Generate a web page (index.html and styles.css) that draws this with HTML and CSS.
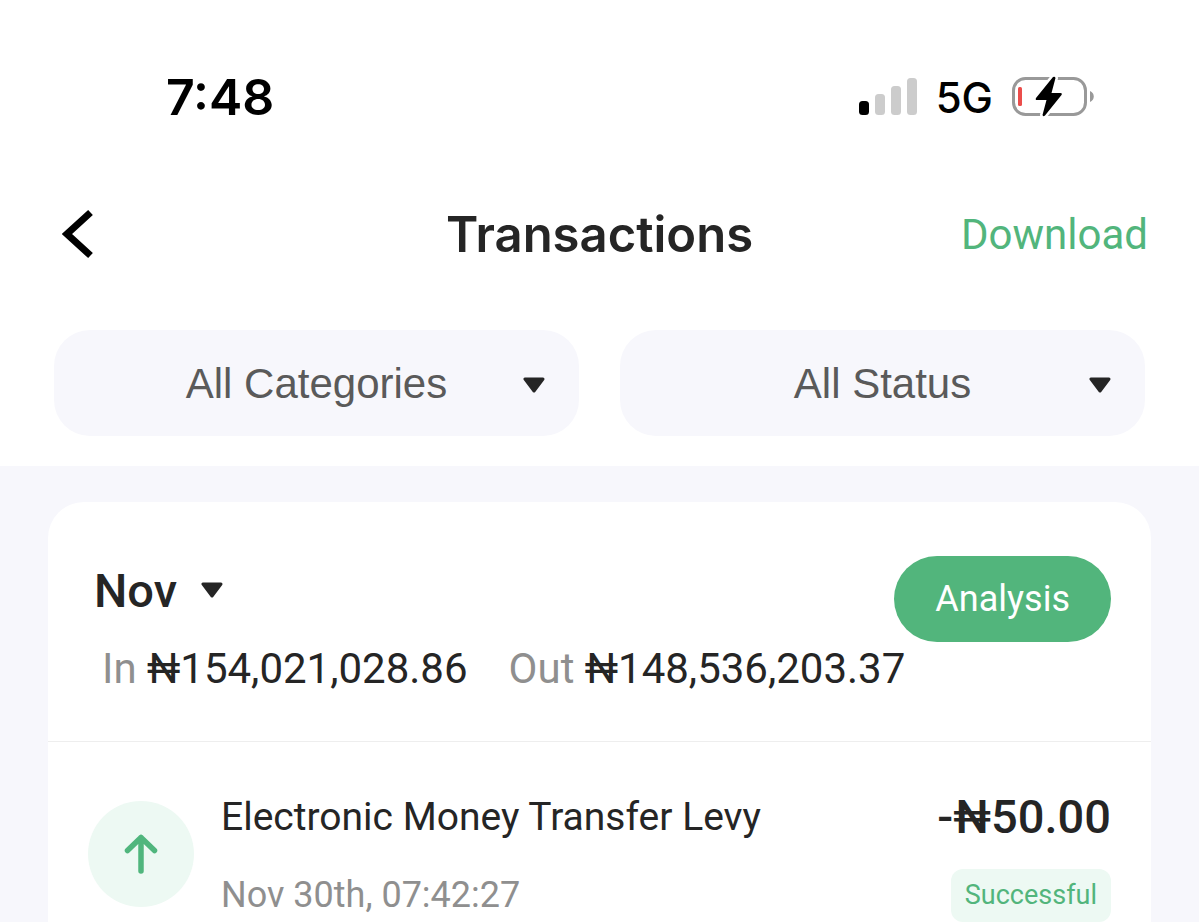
FILE: index.html
```html
<!DOCTYPE html>
<html lang="en">
<head>
  <meta charset="UTF-8">
  <meta name="viewport" content="width=device-width, initial-scale=1">
  <title>Transactions</title>
  <link rel="stylesheet" href="styles.css">
</head>
<body>
  <header class="top">
    <!-- Status bar -->
    <div class="status-bar">
      <span class="clock">7:48</span>
      <div class="status-icons">
        <svg class="signal" width="58" height="38" viewBox="0 0 58 38" aria-hidden="true">
          <rect x="0" y="23" width="10" height="14" rx="3.500" fill="#000"/>
          <rect x="16" y="16" width="10" height="21" rx="3.500" fill="#ccc"/>
          <rect x="32" y="8" width="10" height="29" rx="3.500" fill="#ccc"/>
          <rect x="48" y="0" width="10" height="37" rx="3.500" fill="#ccc"/>
        </svg>
        <span class="network">5G</span>
        <svg class="battery" width="82" height="42" viewBox="0 0 82 42" aria-hidden="true">
          <rect x="1.500" y="2.500" width="72" height="36" rx="12" fill="none" stroke="#999" stroke-width="3"/>
          <path d="M78 15C83 17 83 24 78 26Z" fill="#999"/>
          <rect x="6" y="11" width="4" height="19" rx="1.500" fill="#eb4d4b"/>
          <path d="M41 1L24 22Q23 24 25 24H34.500L30.500 39Q31 41 33 39.500L49.500 19Q50.500 17 48.500 17H39.500L43.500 2Q43 0 41 1Z" fill="#000" stroke="#fff" stroke-width="5" paint-order="stroke" stroke-linejoin="round"/>
        </svg>
      </div>
    </div>

    <nav class="nav">
      <button class="back" type="button" aria-label="Back">
        <svg width="32" height="50" viewBox="0 0 32 50" aria-hidden="true">
          <path d="M28.500 3.500L5 25L28.500 46.500" fill="none" stroke="#000" stroke-width="7"/>
        </svg>
      </button>
      <h1>Transactions</h1>
      <a class="download" href="#">Download</a>
    </nav>

    <div class="filters">
      <div class="filter">
        <select aria-label="Category">
          <option>All Categories</option>
        </select>
        <svg class="caret" width="22" height="16" viewBox="0 0 22 16" aria-hidden="true">
          <path d="M2 2H20L11 14Z"/>
        </svg>
      </div>
      <div class="filter">
        <select aria-label="Status">
          <option>All Status</option>
        </select>
        <svg class="caret" width="22" height="16" viewBox="0 0 22 16" aria-hidden="true">
          <path d="M2 2H20L11 14Z"/>
        </svg>
      </div>
    </div>
  </header>

  <main>
    <section class="card">
      <div class="summary">
        <div class="summary-head">
          <div class="month">
            <select aria-label="Month">
              <option>Nov</option>
            </select>
            <svg class="caret" width="22" height="16" viewBox="0 0 22 16" aria-hidden="true">
              <path d="M2 2H20L11 14Z"/>
            </svg>
          </div>
          <button class="analysis" type="button">Analysis</button>
        </div>
        <div class="totals">
          <div>In <strong>₦154,021,028.86</strong></div>
          <div>Out <strong>₦148,536,203.37</strong></div>
        </div>
      </div>

      <!-- Transaction list -->
      <article class="transaction">
        <div class="icon">
          <svg width="34" height="40" viewBox="0 0 34 40" aria-hidden="true">
            <path d="M17 37V3.500M3.500 16.500L17 3.500L30.500 16.500" fill="none" stroke="#50b67d" stroke-width="5.500" stroke-linecap="round" stroke-linejoin="round"/>
          </svg>
        </div>
        <div class="details">
          <h2>Electronic Money Transfer Levy</h2>
          <time datetime="11-30T07:42:27">Nov 30th, 07:42:27</time>
        </div>
        <div class="result">
          <span class="amount">-₦50.00</span>
          <span class="badge">Successful</span>
        </div>
      </article>
    </section>
  </main>
</body>
</html>
```
FILE: styles.css
```css
:root {
  --green: #52b57c;
  --green-light: #edf9f3;
  --surface: #f7f7fc;
  --text: #252525;
  --muted: #8f8f8f;
}
* {
  box-sizing: border-box;
}
body {
  margin: 0;
  min-height: 100vh;
  display: flex;
  flex-direction: column;
  font-family: Roboto, sans-serif;
  background: var(--surface);
  color: var(--text);
}
h1, h2 {
  margin: 0;
}
button, select {
  border: none;
  padding: 0;
  background: none;
  font: inherit;
  color: inherit;
  cursor: pointer;
}
select {
  appearance: none;
}
.top {
  background: #fff;
  padding: 67px 54px 30px;
}

/* Status bar */
.status-bar {
  display: flex;
  justify-content: space-between;
  align-items: center;
  height: 60px;
  padding: 0 51px 0 112px;
  font-family: Inter, sans-serif;
  color: #000;
}
.clock {
  font-size: 50px;
  font-weight: 600;
}
.status-icons {
  display: flex;
  align-items: center;
  gap: 19px;
}
.network {
  font-size: 42px;
  font-weight: 500;
}

/* Title row */
.nav {
  display: grid;
  grid-template-columns: 1fr auto 1fr;
  align-items: center;
  height: 80px;
  margin: 67px -3px 56px;
}
.back {
  justify-self: start;
  display: flex;
  padding: 0 11px;
}
h1 {
  font-family: Inter, sans-serif;
  font-size: 49px;
  font-weight: 600;
}
.download {
  justify-self: end;
  font-size: 42px;
  color: var(--green);
  text-decoration: none;
}

/* Filters */
.filters {
  display: grid;
  grid-template-columns: 1fr 1fr;
  gap: 41px;
}
.filter {
  display: grid;
  align-items: center;
  background: var(--surface);
  border-radius: 36px;
}
.filter select,
.filter .caret {
  grid-area: 1 / 1;
}
.filter select {
  height: 106px;
  font-family: "Liberation Sans", Arial, sans-serif;
  font-size: 42px;
  color: #5a5a5a;
  text-align-last: center;
}
.filter .caret {
  justify-self: end;
  margin: 4px 34px 0 0;
}
.caret {
  fill: var(--text);
  stroke: var(--text);
  stroke-width: 3;
  stroke-linejoin: round;
  pointer-events: none;
}

/* Card */
main {
  flex: 1;
  display: flex;
  padding: 36px 48px 0;
}
.card {
  flex: 1;
  background: #fff;
  border-radius: 36px 36px 0 0;
}
.summary {
  padding: 54px 40px 45px 46px;
  border-bottom: 1px solid #eee;
}
.summary-head {
  display: flex;
  justify-content: space-between;
  align-items: flex-start;
}
.month {
  display: flex;
  align-items: center;
  gap: 24px;
}
.month select {
  height: 68px;
  font-size: 47px;
  font-weight: 500;
}
.analysis {
  height: 86px;
  padding: 0 41px;
  border-radius: 43px;
  background: var(--green);
  color: #fff;
  font-size: 36px;
}
.totals {
  display: flex;
  gap: 41px;
  padding-left: 8px;
  font-size: 42px;
  line-height: 54px;
  color: var(--muted);
}
.totals strong {
  font-weight: 400;
  color: var(--text);
}

/* Transaction row */
.transaction {
  display: flex;
  padding: 47px 40px 0;
}
.icon {
  flex: none;
  display: flex;
  align-items: center;
  justify-content: center;
  width: 106px;
  height: 106px;
  margin-top: 12px;
  border-radius: 50%;
  background: var(--green-light);
}
.details {
  flex: 1;
  padding-left: 27px;
}
h2 {
  font-size: 39px;
  font-weight: 400;
  line-height: 56px;
}
.details time {
  display: block;
  margin-top: 28px;
  font-size: 36px;
  line-height: 44px;
  color: var(--muted);
}
.result {
  display: flex;
  flex-direction: column;
  align-items: flex-end;
  gap: 24px;
}
.amount {
  font-size: 47px;
  font-weight: 500;
  line-height: 56px;
}
.badge {
  padding: 0 14px;
  border-radius: 12px;
  background: var(--green-light);
  color: var(--green);
  font-size: 27px;
  line-height: 53px;
}
```
